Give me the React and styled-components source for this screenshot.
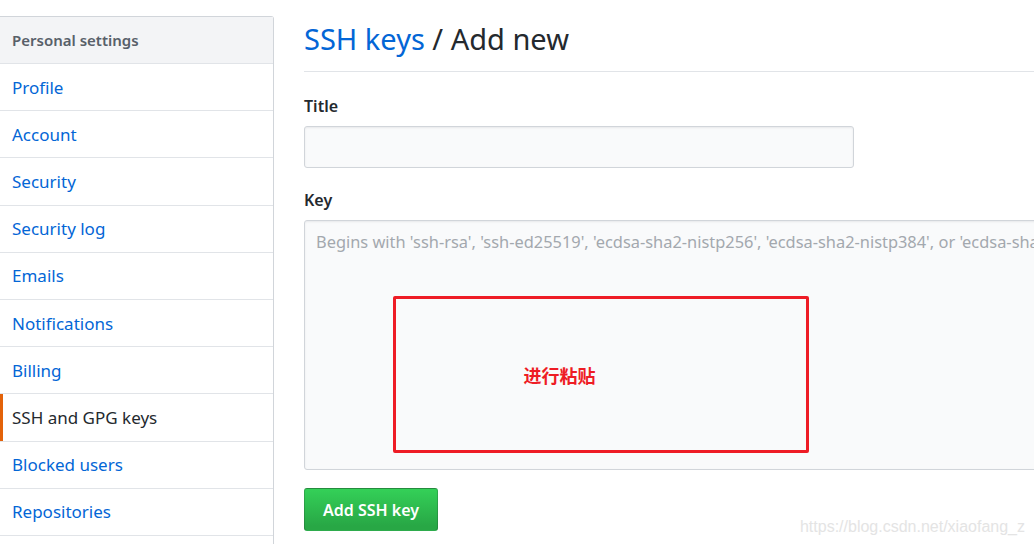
import React from 'react'
import styled, { createGlobalStyle } from 'styled-components'

const GlobalStyle = createGlobalStyle`
  html, body {
    margin: 0;
    padding: 0;
    background: #fff;
    overflow: hidden;
  }
  body {
    font-family: "Noto Sans", "Noto Sans CJK SC", sans-serif;
    color: #24292e;
  }
`

const Page = styled.div`
  display: flex;
  align-items: flex-start;
  gap: 30px;
  width: 1034px;
  height: 544px;
  overflow: hidden;
  position: relative;
`

const Sidebar = styled.nav`
  flex: 0 0 273px;
  margin-top: 16px;
  min-height: 560px;
  border: 1px solid #d1d5da;
  border-left: none;
  border-radius: 0 3px 0 0;
`

const SideHeader = styled.div`
  height: 46px;
  display: flex;
  align-items: center;
  padding-left: 12px;
  background: #f3f4f6;
  border-bottom: 1px solid #e1e4e8;
  font-size: 15px;
  font-weight: 600;
  color: #586069;
`

const SideItem = styled.a`
  display: flex;
  align-items: center;
  height: 46.2px;
  padding-left: 12px;
  border-bottom: 1px solid #e1e4e8;
  font-size: 17px;
  text-decoration: none;
  color: ${p => (p.$active ? '#24292e' : '#0366d6')};
  box-shadow: ${p => (p.$active ? 'inset 3px 0 0 #e36209' : 'none')};
`

const Main = styled.main`
  flex: 1;
  min-width: 0;
  padding-top: 20px;
`

const Heading = styled.h2`
  margin: 0;
  padding-bottom: 13px;
  border-bottom: 1px solid #e1e4e8;
  font-size: 29px;
  font-weight: 400;
  line-height: 38px;
  white-space: nowrap;

  a {
    color: #0366d6;
    text-decoration: none;
  }
`

const Field = styled.div`
  margin-top: ${p => p.$top || '18px'};
`

const Label = styled.label`
  display: block;
  font-size: 16px;
  font-weight: 600;
  line-height: 28px;
  margin-bottom: 6px;
`

const Input = styled.input`
  box-sizing: border-box;
  width: 550px;
  height: 42px;
  background: #f9fafb;
  border: 1px solid #d1d5da;
  border-radius: 3px;
  box-shadow: inset 0 1px 2px rgba(27, 31, 35, 0.075);
  outline: none;
`

const KeyWrap = styled.div`
  position: relative;
  width: 760px;
`

const TextArea = styled.textarea`
  box-sizing: border-box;
  display: block;
  width: 760px;
  height: 250px;
  padding: 8px 11px;
  resize: none;
  background: #f9fafb;
  border: 1px solid #d1d5da;
  border-radius: 3px;
  box-shadow: inset 0 1px 2px rgba(27, 31, 35, 0.075);
  font-family: "Noto Sans", sans-serif;
  font-size: 16.4px;
  line-height: 26px;
  white-space: pre;
  overflow: hidden;
  outline: none;

  &::placeholder {
    color: #a3a8ae;
  }
`

// the red "paste here" annotation drawn over the key field
const PasteMark = styled.div`
  position: absolute;
  left: 89px;
  top: 76px;
  width: 416px;
  height: 157px;
  border: 3px solid #ee1c25;
  border-radius: 2px;
  display: flex;
  align-items: center;
  justify-content: center;
  padding-right: 83px;
  box-sizing: border-box;
  color: #ee1c25;
  font-family: "Noto Sans CJK SC", sans-serif;
  font-size: 18px;
  font-weight: 700;
`

const SubmitButton = styled.button`
  margin-top: 18px;
  height: 43px;
  padding: 0 18px;
  border: 1px solid rgba(27, 31, 35, 0.2);
  border-radius: 3px;
  background: linear-gradient(-180deg, #34d058 0%, #28a745 90%);
  color: #fff;
  font-family: "Noto Sans", sans-serif;
  font-size: 16px;
  font-weight: 600;
`

const Watermark = styled.div`
  position: absolute;
  right: 9px;
  bottom: 8px;
  font-family: "Liberation Sans", sans-serif;
  font-size: 16px;
  color: #e4e4e4;
`

const items = [
  'Profile',
  'Account',
  'Security',
  'Security log',
  'Emails',
  'Notifications',
  'Billing',
  'SSH and GPG keys',
  'Blocked users',
  'Repositories',
]

export default function App() {
  return (
    <>
      <GlobalStyle />
      <Page>
        <Sidebar>
          <SideHeader>Personal settings</SideHeader>
          {items.map(item => (
            <SideItem key={item} href="#" $active={item === 'SSH and GPG keys'}>
              {item}
            </SideItem>
          ))}
        </Sidebar>
        <Main>
          <Heading>
            <a href="#">SSH keys</a> / Add new
          </Heading>
          <Field $top="20px">
            <Label>Title</Label>
            <Input type="text" />
          </Field>
          <Field>
            <Label>Key</Label>
            <KeyWrap>
              <TextArea placeholder="Begins with 'ssh-rsa', 'ssh-ed25519', 'ecdsa-sha2-nistp256', 'ecdsa-sha2-nistp384', or 'ecdsa-sha2-nistp521'" />
              <PasteMark>进行粘贴</PasteMark>
            </KeyWrap>
          </Field>
          <SubmitButton>Add SSH key</SubmitButton>
        </Main>
        <Watermark>https://blog.csdn.net/xiaofang_z</Watermark>
      </Page>
    </>
  )
}
